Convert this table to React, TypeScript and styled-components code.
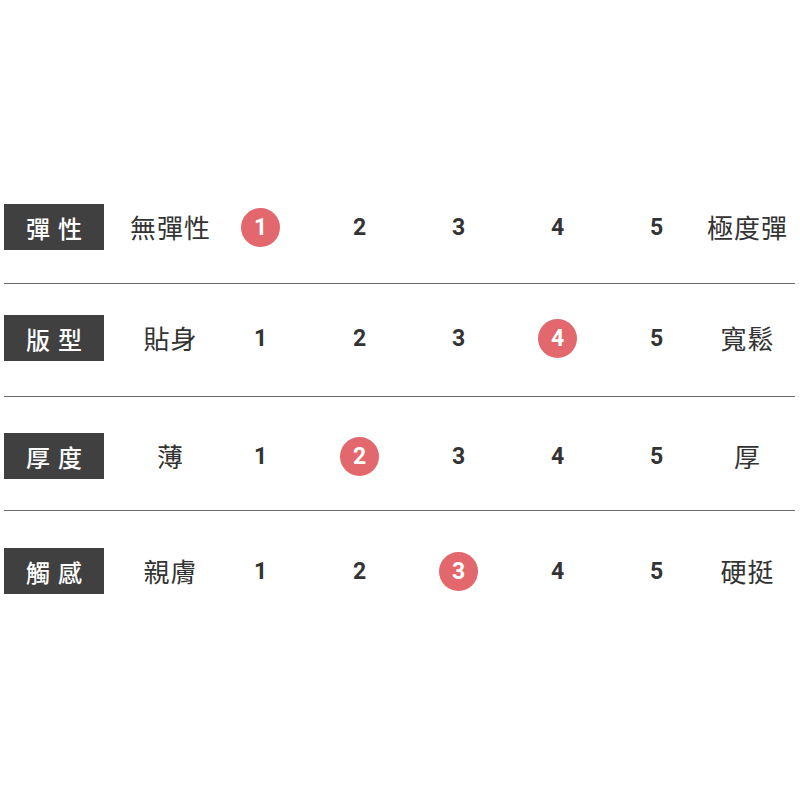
import React from "react";
import styled, { createGlobalStyle } from "styled-components";

const Global = createGlobalStyle`
  html, body { margin: 0; padding: 0; background: #ffffff; }
  body { font-family: "Noto Sans CJK TC", "Noto Sans", sans-serif; }
`;

const Page = styled.div`
  width: 800px;
  height: 800px;
  box-sizing: border-box;
  padding: 204px 5px 0 4px;
  display: flex;
  flex-direction: column;
`;

const Row = styled.div`
  display: flex;
  align-items: center;
  height: 46px;
`;

const Divider = styled.div<{ $before: number; $after: number }>`
  height: 0;
  border-top: 1.5px solid #6a6a6a;
  margin: ${(p) => p.$before}px 0 ${(p) => p.$after}px;
`;

const Label = styled.div`
  width: 100px;
  height: 46px;
  background: #404040;
  color: #ffffff;
  display: flex;
  align-items: center;
  justify-content: center;
  font-family: "Noto Sans CJK TC", sans-serif;
  font-size: 24px;
  font-weight: 500;
  letter-spacing: 8px;
  text-indent: 8px;
  margin-right: 21px;
`;

const Word = styled.div`
  width: 90px;
  text-align: center;
  font-family: "Noto Sans CJK TC", sans-serif;
  font-size: 26px;
  letter-spacing: 1px;
  text-indent: 1px;
  color: #333333;
  line-height: 46px;
`;

const Scale = styled.div`
  display: grid;
  grid-template-columns: repeat(5, 40px);
  column-gap: 59px;
  margin: 0 25px 0 26px;
`;

const Num = styled.div<{ $active: boolean }>`
  width: 39px;
  height: 39px;
  border-radius: 50%;
  display: flex;
  align-items: center;
  justify-content: center;
  font-family: Roboto, "Liberation Sans", sans-serif;
  font-weight: 700;
  font-size: 23px;
  color: ${(p) => (p.$active ? "#ffffff" : "#333333")};
  background: ${(p) => (p.$active ? "#e2686d" : "transparent")};
`;

const rows = [
  { label: "彈性", left: "無彈性", right: "極度彈", value: 1, before: 0, after: 0 },
  { label: "版型", left: "貼身", right: "寬鬆", value: 4, before: 33, after: 31 },
  { label: "厚度", left: "薄", right: "厚", value: 2, before: 35, after: 36 },
  { label: "觸感", left: "親膚", right: "硬挺", value: 3, before: 31, after: 37 },
];

export default function App() {
  return (
    <>
      <Global />
      <Page>
        {rows.map((r, i) => (
          <React.Fragment key={r.label}>
            {i > 0 && <Divider $before={r.before} $after={r.after} />}
            <Row>
              <Label>{r.label}</Label>
              <Word>{r.left}</Word>
              <Scale>
                {[1, 2, 3, 4, 5].map((n) => (
                  <Num key={n} $active={n === r.value}>
                    {n}
                  </Num>
                ))}
              </Scale>
              <Word>{r.right}</Word>
            </Row>
          </React.Fragment>
        ))}
      </Page>
    </>
  );
}
